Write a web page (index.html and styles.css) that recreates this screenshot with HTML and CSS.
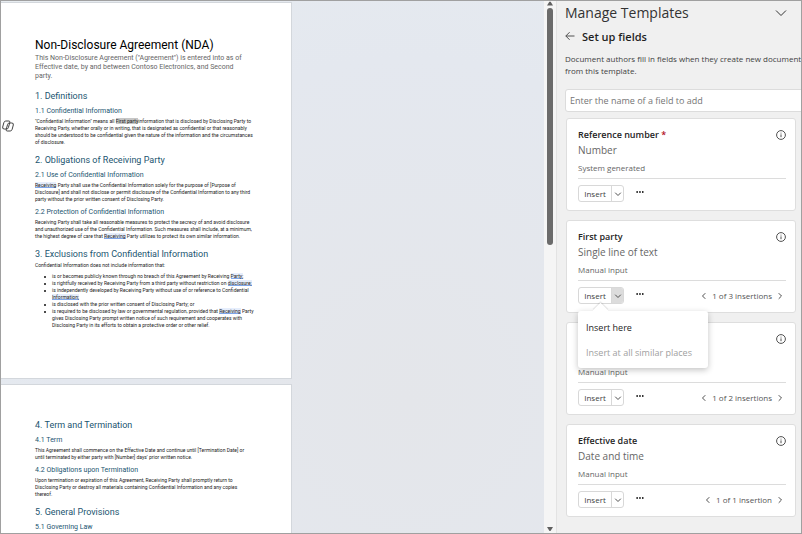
FILE: index.html
```html
<!DOCTYPE html>
<html lang="en">
<head>
<meta charset="utf-8">
<title>Manage Templates</title>
<link rel="stylesheet" href="styles.css">
</head>
<body>
<svg class="sprite" aria-hidden="true">
  <symbol id="info" viewBox="0 0 10 10"><circle cx="5" cy="5" r="4.4"/><path d="M5 4.4V7.2M5 2.7V3.5"/></symbol>
  <symbol id="down" viewBox="0 0 8 8"><path d="M1.2 2.7L4 5.5L6.8 2.7"/></symbol>
  <symbol id="left" viewBox="0 0 8 8"><path d="M5.3 1.2L2.5 4L5.3 6.8"/></symbol>
  <symbol id="right" viewBox="0 0 8 8"><path d="M2.7 1.2L5.5 4L2.7 6.8"/></symbol>
  <symbol id="dots" viewBox="0 0 8 2"><path d="M0.4 1H1.9M3.2 1H4.7M6 1H7.5"/></symbol>
</svg>
<main class="workspace">
  <article class="page first">
    <svg class="copilot" viewBox="0 0 12 12" aria-hidden="true"><path d="M3.8 1H6.8Q8.2 1 7.8 2.5L6.4 7.6Q6 9 4.6 9H2.2Q.2 9 .7 7L1.8 2.8Q2.3 1 3.8 1ZM7.4 3H9.8Q11.8 3 11.3 5L10.2 9.2Q9.7 11 8.2 11H5.2Q3.8 11 4.2 9.5L5.6 4.4Q6 3 7.4 3Z"/></svg>
    <h1>Non-Disclosure Agreement (NDA)</h1>
    <p class="subtitle">This Non-Disclosure Agreement ("Agreement") is entered into as of<br>Effective date, by and between Contoso Electronics, and Second<br>party.</p>
    <h2>1. Definitions</h2>
    <h3>1.1 Confidential Information</h3>
    <p>"Confidential Information" means all <span class="picked">First party</span>information that is disclosed by Disclosing Party to<br>Receiving Party, whether orally or in writing, that is designated as confidential or that reasonably<br>should be understood to be confidential given the nature of the information and the circumstances<br>of disclosure.</p>
    <h2>2. Obligations of Receiving Party</h2>
    <h3>2.1 Use of Confidential Information</h3>
    <p><span class="hint">Receiving</span> Party shall use the Confidential Information solely for the purpose of [Purpose of<br>Disclosure] and shall not disclose or permit disclosure of the Confidential Information to any third<br>party without the prior written consent of Disclosing Party.</p>
    <h3>2.2 Protection of Confidential Information</h3>
    <p>Receiving Party shall take all reasonable measures to protect the secrecy of and avoid disclosure<br>and unauthorized use of the Confidential Information. Such measures shall include, at a minimum,<br>the highest degree of care that <span class="hint">Receiving</span> Party utilizes to protect its own similar information.</p>
    <h2>3. Exclusions from Confidential Information</h2>
    <p>Confidential Information does not include information that:</p>
    <ul>
      <li>is or becomes publicly known through no breach of this Agreement by Receiving <span class="hint">Party;</span></li>
      <li>is rightfully received by Receiving Party from a third party without restriction on <span class="hint">disclosure;</span></li>
      <li>is independently developed by Receiving Party without use of or reference to Confidential<br><span class="hint">Information;</span></li>
      <li>is disclosed with the prior written consent of Disclosing Party; or</li>
      <li>is required to be disclosed by law or governmental regulation, provided that <span class="hint">Receiving</span> Party<br>gives Disclosing Party prompt written notice of such requirement and cooperates with<br>Disclosing Party in its efforts to obtain a protective order or other relief.</li>
    </ul>
  </article>
  <article class="page second">
    <h2>4. Term and Termination</h2>
    <h3>4.1 Term</h3>
    <p>This Agreement shall commence on the Effective Date and continue until [Termination Date] or<br>until terminated by either party with [Number] days' prior written notice.</p>
    <h3>4.2 Obligations upon Termination</h3>
    <p>Upon termination or expiration of this Agreement, Receiving Party shall promptly return to<br>Disclosing Party or destroy all materials containing Confidential Information and any copies<br>thereof.</p>
    <h2>5. General Provisions</h2>
    <h3>5.1 Governing Law</h3>
  </article>
</main>
<div class="scrollbar" aria-hidden="true">
  <svg viewBox="0 0 8 6"><path d="M1 4.5L3.2 .9Q4 -.1 4.8 .9L7 4.5Z"/></svg>
  <div class="track"><div class="thumb"></div></div>
  <svg viewBox="0 0 8 6"><path d="M1 0L3.2 3.6Q4 4.6 4.8 3.6L7 0Z"/></svg>
</div>
<aside class="panel">
  <header>
    <h1>Manage Templates</h1>
    <button class="icon" aria-label="Collapse"><svg class="chevron" viewBox="0 0 12 12"><path d="M1 3.5L6 8.5L11 3.5"/></svg></button>
  </header>
  <div class="crumb">
    <button class="icon" aria-label="Back"><svg class="back" viewBox="0 0 10 10"><path d="M9.5 5H.8M4.6 1.2L.8 5L4.6 8.8"/></svg></button>
    <h2>Set up fields</h2>
  </div>
  <p class="intro">Document authors fill in fields when they create new documents<br>from this template.</p>
  <input class="search" type="text" aria-label="Field name" placeholder="Enter the name of a field to add">
  <section class="card">
    <div class="heading"><h3>Reference number <span class="required">*</span></h3><button class="icon" aria-label="Details"><svg class="info"><use href="#info"/></svg></button></div>
    <p class="type">Number</p>
    <p class="source">System generated</p>
    <div class="actions">
      <div class="split"><button>Insert</button><button class="arrow" aria-label="Insert options"><svg><use href="#down"/></svg></button></div>
      <button class="icon" aria-label="More"><svg class="dots"><use href="#dots"/></svg></button>
    </div>
  </section>
  <section class="card">
    <div class="heading"><h3>First party</h3><button class="icon" aria-label="Details"><svg class="info"><use href="#info"/></svg></button></div>
    <p class="type">Single line of text</p>
    <p class="source">Manual input</p>
    <div class="actions">
      <div class="split"><button>Insert</button><button class="arrow open" aria-label="Insert options"><svg><use href="#down"/></svg></button></div>
      <button class="icon" aria-label="More"><svg class="dots"><use href="#dots"/></svg></button>
      <div class="pager"><button class="icon" aria-label="Previous"><svg><use href="#left"/></svg></button><span>1 of 3 insertions</span><button class="icon" aria-label="Next"><svg><use href="#right"/></svg></button></div>
      <div class="menu"><button>Insert here</button><button disabled>Insert at all similar places</button></div>
    </div>
  </section>
  <section class="card">
    <div class="heading"><button class="icon" aria-label="Details"><svg class="info"><use href="#info"/></svg></button></div>
    <p class="type"></p>
    <p class="source">Manual input</p>
    <div class="actions">
      <div class="split"><button>Insert</button><button class="arrow" aria-label="Insert options"><svg><use href="#down"/></svg></button></div>
      <button class="icon" aria-label="More"><svg class="dots"><use href="#dots"/></svg></button>
      <div class="pager"><button class="icon" aria-label="Previous"><svg><use href="#left"/></svg></button><span>1 of 2 insertions</span><button class="icon" aria-label="Next"><svg><use href="#right"/></svg></button></div>
    </div>
  </section>
  <section class="card">
    <div class="heading"><h3>Effective date</h3><button class="icon" aria-label="Details"><svg class="info"><use href="#info"/></svg></button></div>
    <p class="type">Date and time</p>
    <p class="source">Manual input</p>
    <div class="actions">
      <div class="split"><button>Insert</button><button class="arrow" aria-label="Insert options"><svg><use href="#down"/></svg></button></div>
      <button class="icon" aria-label="More"><svg class="dots"><use href="#dots"/></svg></button>
      <div class="pager"><button class="icon" aria-label="Previous"><svg><use href="#left"/></svg></button><span>1 of 1 insertion</span><button class="icon" aria-label="Next"><svg><use href="#right"/></svg></button></div>
    </div>
  </section>
</aside>
</body>
</html>
```
FILE: styles.css
```css
* { box-sizing: border-box; margin: 0; padding: 0; }
body {
  display: flex;
  height: 100vh;
  overflow: hidden;
  border: 1px solid #a0a0a0;
  background: #f0f0f0;
  font-family: "Open Sans", sans-serif;
  color: #424242;
}
button { border: 0; background: none; color: inherit; font: inherit; }
svg { display: block; fill: none; stroke: #505050; stroke-width: 1; overflow: visible; }
.sprite { position: absolute; width: 0; height: 0; }

/* Document */
.workspace {
  flex: 1;
  overflow: hidden;
  padding-top: 1px;
  background: radial-gradient(circle at 75% 75%, #e4e6ea, #e4e8ef 60%, #e7ecf0);
  font-family: Roboto, sans-serif;
}
.page {
  position: relative;
  width: 291px;
  padding: 34px 0 49px 34px;
  background: #fff;
  border: 1px solid #d3d7dc;
  border-left: 0;
  white-space: nowrap;
  font-size: 5px;
  line-height: 7px;
  color: #1c1c1c;
}
.second { margin-top: 5px; }
.page h1 { font-size: 12px; line-height: 16px; font-weight: 400; color: #000; margin-bottom: 1px; }
.page .subtitle { font-size: 7px; line-height: 9px; color: #666; margin-bottom: 9px; }
.page h2 { font-size: 9px; line-height: 12px; font-weight: 400; color: #1b5570; margin-bottom: 2px; }
.page h3 { font-size: 7px; line-height: 11px; font-weight: 400; color: #1b5570; margin: 4px 0 1px; }
.page p + h2 { margin-top: 8px; }
.page ul { list-style: none; margin: 4px 0 0 17px; }
.page li { position: relative; }
.page li::before { content: ""; position: absolute; left: -8px; top: 3px; width: 2px; height: 2px; border-radius: 1px; background: #111; }
.picked { background: #c6c6c6; }
.hint { background: linear-gradient(#7ea6ea, #7ea6ea) bottom / 100% 1px no-repeat, #e6eefc; }
.copilot { position: absolute; left: 1px; top: 117px; width: 12px; height: 12px; stroke: #444; }

/* Scrollbar */
.scrollbar { display: flex; flex-direction: column; align-items: center; flex: 0 0 12px; background: #f5f5f5; }
.scrollbar svg { width: 8px; height: 6px; fill: #5f5f5f; stroke: none; }
.track { flex: 1; padding: 1px 0 4px; }
.thumb { width: 6px; height: 46%; border-radius: 3px; background: #6b6b6b; }

/* Task pane */
.panel { flex: 0 0 245px; overflow: hidden; padding-left: 8px; border-left: 1px solid #e3e3e3; }
.icon { display: grid; place-items: center; }
.panel header { display: flex; align-items: center; justify-content: space-between; padding-right: 14px; height: 23px; }
.panel header h1 { font-size: 14px; line-height: 23px; font-weight: 400; color: #333; }
.chevron { width: 12px; height: 12px; stroke: #333; }
.crumb { display: flex; align-items: center; gap: 7px; height: 24px; }
.back { width: 10px; height: 10px; }
.crumb h2 { font-size: 11px; font-weight: 600; color: #1f1f1f; }
.intro { margin-top: 5px; font-size: 8px; line-height: 12px; white-space: nowrap; }
.search {
  display: block;
  width: calc(100% + 8px);
  height: 23px;
  margin: 12px 0 6px;
  padding: 0 4px;
  border: 1px solid #dcdcdc;
  border-radius: 3px;
  background: #fff;
  font: 9px "Open Sans", sans-serif;
}
.search::placeholder { color: #757575; opacity: 1; }
.card {
  margin: 0 5px 9px 1px;
  padding: 9px 9px 8px 11px;
  border: 1px solid #dedede;
  border-radius: 3px;
  background: #fff;
}
.heading { display: flex; align-items: center; min-height: 14px; }
.heading .icon { margin-left: auto; }
.heading h3 { font-size: 9px; line-height: 14px; font-weight: 600; color: #242424; }
.required { color: #b10e1c; }
.info { width: 10px; height: 10px; }
.type { min-height: 16px; font-size: 10px; line-height: 16px; color: #666; }
.source { margin-top: 4px; padding-bottom: 4px; border-bottom: 1px solid #dcdcdc; font-size: 8px; line-height: 12px; color: #666; }
.actions { position: relative; display: flex; align-items: center; gap: 12px; margin-top: 6px; }
.split { display: flex; height: 17px; border: 1px solid #d8d8d8; border-radius: 3px; overflow: hidden; font-size: 8px; line-height: 15px; }
.split button:first-child { width: 32px; }
.split .arrow { display: grid; place-items: center; width: 12px; border-left: 1px solid #d8d8d8; }
.split .open { background: #dcdcdc; }
.arrow svg, .pager svg { width: 8px; height: 8px; }
.dots { width: 8px; height: 2px; margin-bottom: 4px; stroke: #333; stroke-width: 2; }
.pager { display: flex; align-items: center; gap: 4px; margin-left: auto; padding-right: 2px; font-size: 8px; color: #555; }
.menu {
  position: absolute;
  z-index: 1;
  left: 0;
  top: 24px;
  width: 130px;
  padding: 4px 0 3px;
  border-radius: 3px;
  background: #fff;
  box-shadow: 0 2px 6px #0000003d;
  font-size: 9px;
  white-space: nowrap;
}
.menu::before { content: ""; position: absolute; left: 17px; top: -6px; width: 11px; height: 11px; background: #fff; transform: rotate(45deg); box-shadow: -1px -1px 1px #0000001a; }
.menu button { position: relative; display: block; width: 100%; height: 25px; padding-left: 8px; text-align: left; color: #242424; }
.menu button:disabled { color: #a0a0a0; }
```
